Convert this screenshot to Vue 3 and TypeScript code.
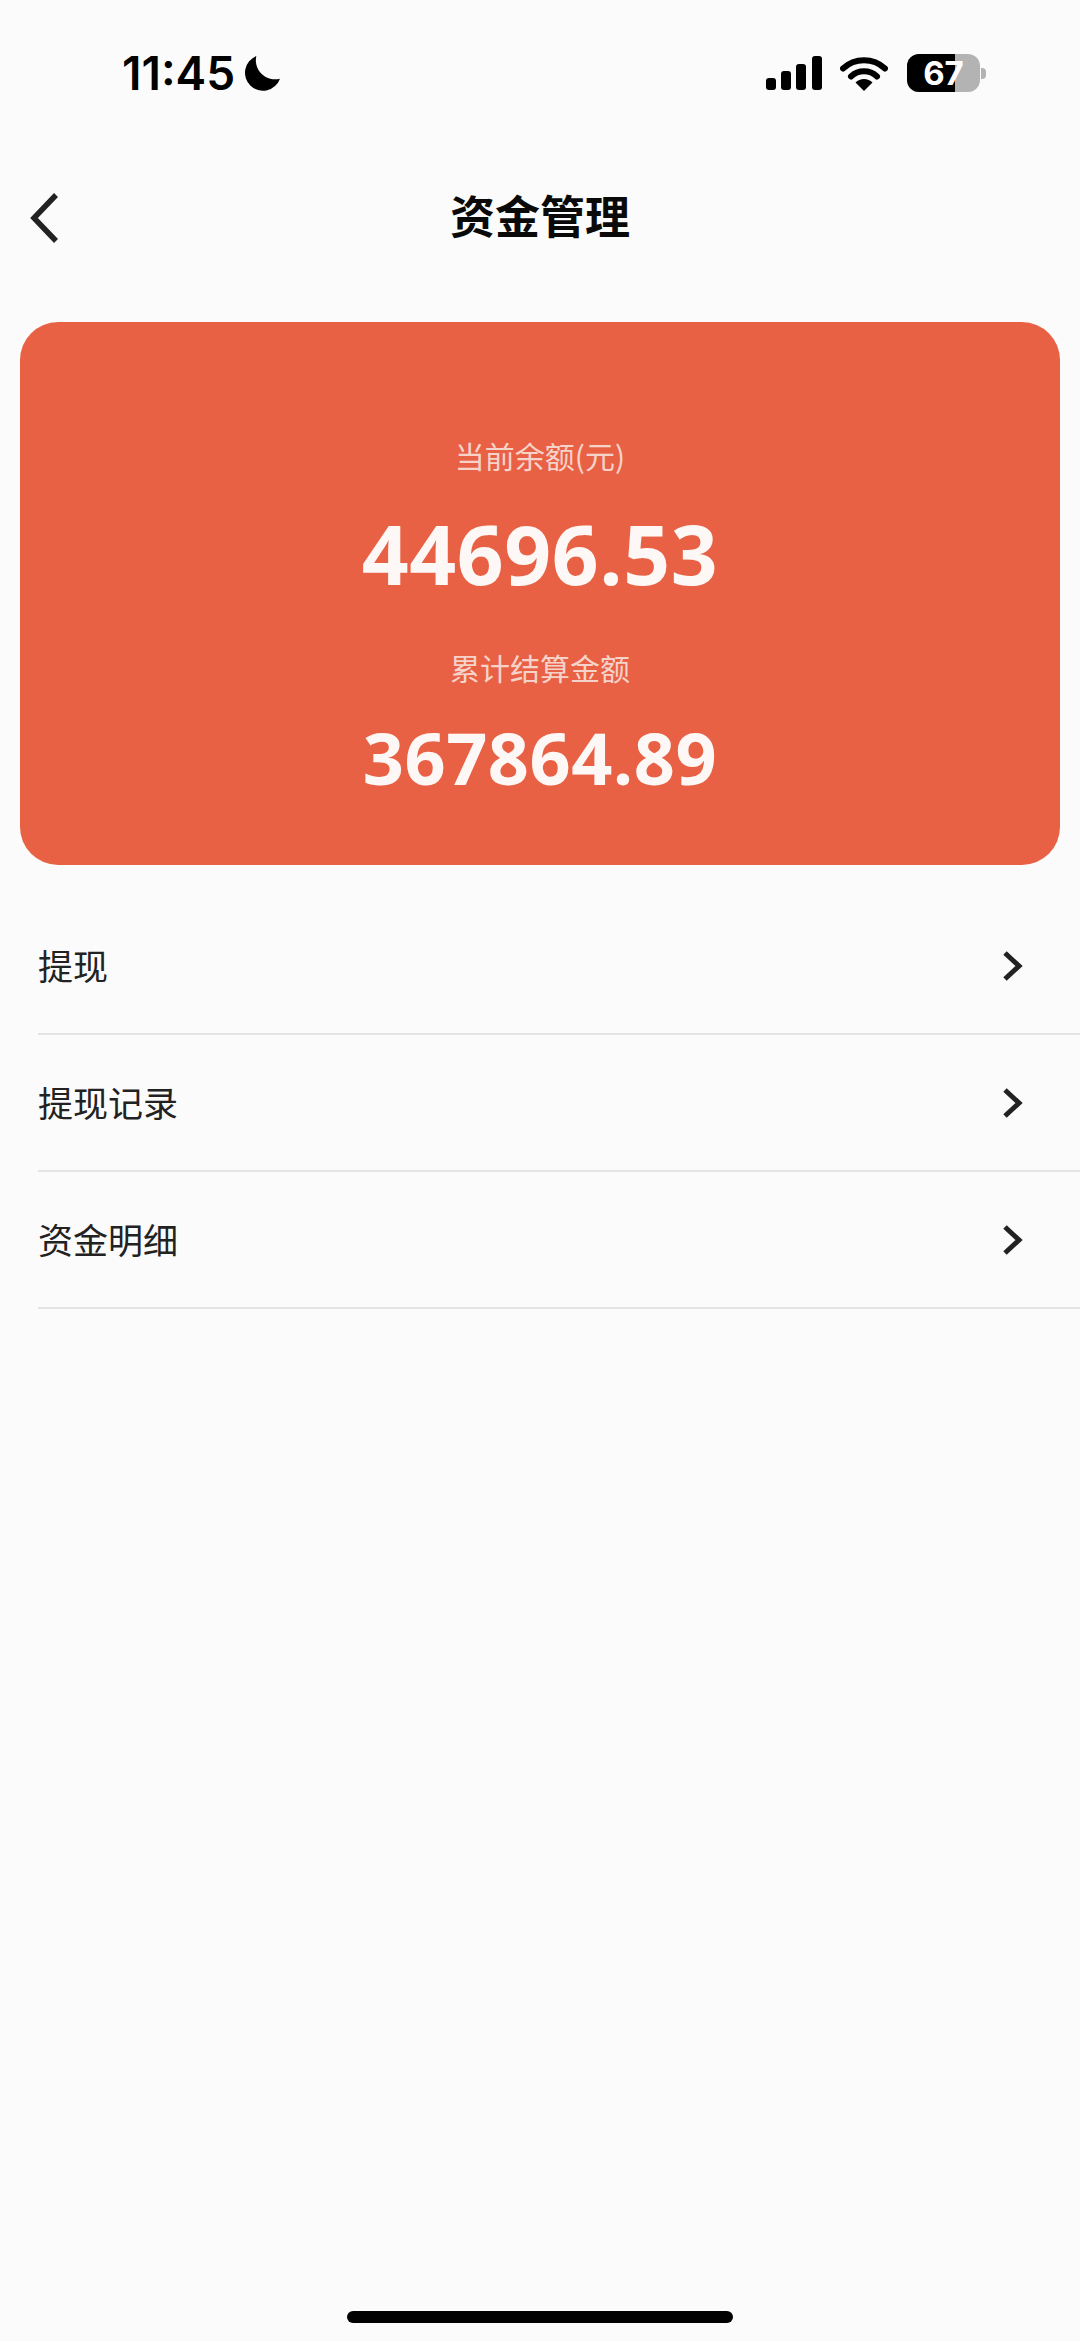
<script setup lang="ts">
const rows: string[] = ['提现', '提现记录', '资金明细']
const bars = [
  { x: 0, y: 22, h: 12 },
  { x: 15, y: 15, h: 19 },
  { x: 30, y: 8, h: 26 },
  { x: 46, y: 0, h: 34 },
]
</script>

<template>
  <div class="page">
    <header class="status">
      <div class="status-left">
        <span class="time">11:45</span>
        <svg class="moon" width="37" height="37" viewBox="0 0 36 36">
          <path d="M12 1A17.5 17.5 0 1 0 35 23A18.5 18.5 0 0 1 12 1Z" fill="#000" />
        </svg>
      </div>
      <div class="status-right">
        <svg width="56" height="34" viewBox="0 0 56 34">
          <rect v-for="b in bars" :key="b.x" :x="b.x" :y="b.y" width="10" :height="b.h" rx="3" fill="#000" />
        </svg>
        <svg class="wifi" width="48" height="35" viewBox="0 0 48 35">
          <path d="M3 12.500A31 31 0 0 1 45 12.500" fill="none" stroke="#000" stroke-width="6" stroke-linecap="round" />
          <path d="M11 20.500A19 19 0 0 1 37 20.500" fill="none" stroke="#000" stroke-width="6" stroke-linecap="round" />
          <path d="M15.500 26.500A12 12 0 0 1 32.500 26.500L24 35Z" fill="#000" />
        </svg>
        <div class="battery">
          <div class="battery-body">
            <div class="battery-fill"></div>
            <span class="battery-text">67</span>
          </div>
          <div class="battery-nub"></div>
        </div>
      </div>
    </header>

    <nav class="nav">
      <svg class="back" width="36" height="52" viewBox="0 0 36 52">
        <path d="M29 3L7 26L29 49" fill="none" stroke="#222" stroke-width="5.500" />
      </svg>
      <h1 class="title">资金管理</h1>
      <span></span>
    </nav>

    <section class="card">
      <div class="label">当前余额(元)</div>
      <div class="amount">44696.53</div>
      <div class="label second">累计结算金额</div>
      <div class="amount small">367864.89</div>
    </section>

    <ul class="list">
      <li v-for="r in rows" :key="r" class="row">
        <span class="row-text">{{ r }}</span>
        <svg width="22" height="32" viewBox="0 0 22 32">
          <path d="M3 3L17 16L3 29" fill="none" stroke="#222" stroke-width="5" />
        </svg>
      </li>
    </ul>

    <div class="home"></div>
  </div>
</template>

<style>
html, body { margin: 0; background: #fbfbfb; }
</style>

<style scoped>
.page {
  width: 1080px;
  height: 2341px;
  display: flex;
  flex-direction: column;
  background: #fbfbfb;
  font-family: "Noto Sans", "Noto Sans CJK SC", sans-serif;
  overflow: hidden;
}
.status {
  height: 146px;
  flex: none;
  display: flex;
  align-items: center;
  justify-content: space-between;
  padding: 0 94px 0 122px;
  box-sizing: border-box;
}
.status-left, .status-right { display: flex; align-items: center; }
.time {
  font-family: Inter, sans-serif;
  font-weight: 600;
  font-size: 46px;
  line-height: 50px;
  color: #000;
}
.moon { margin-left: 9px; }
.wifi { margin-left: 18px; }
.battery { display: flex; align-items: center; margin-left: 19px; }
.battery-body {
  position: relative;
  width: 73px;
  height: 38px;
  border-radius: 12px;
  background: #b3b3b3;
  display: flex;
  align-items: center;
  justify-content: center;
}
.battery-fill {
  position: absolute;
  left: 0;
  top: 0;
  bottom: 0;
  width: 48px;
  border-radius: 12px 0 0 12px;
  background: #000;
}
.battery-text {
  position: relative;
  color: #fff;
  font-family: Inter, sans-serif;
  font-weight: 700;
  font-size: 33px;
  line-height: 38px;
}
.battery-nub {
  width: 5px;
  height: 11px;
  margin-left: 1px;
  border-radius: 0 4px 4px 0;
  background: #b3b3b3;
}
.nav {
  height: 144px;
  flex: none;
  display: grid;
  grid-template-columns: 1fr auto 1fr;
  align-items: center;
  padding: 0 27px;
}
.back { display: block; }
.title {
  margin: 0 0 6px;
  font-family: "Noto Sans CJK SC", sans-serif;
  font-size: 45px;
  line-height: 60px;
  font-weight: 700;
  color: #0a0a0a;
}
.card {
  flex: none;
  margin: 32px 20px 0;
  height: 543px;
  box-sizing: border-box;
  padding-top: 113px;
  border-radius: 38px;
  background: #e96144;
  display: flex;
  flex-direction: column;
  align-items: center;
}
.label {
  font-family: "Noto Sans CJK SC", sans-serif;
  font-size: 30px;
  line-height: 40px;
  color: #f6d3ca;
}
.label.second { margin-top: 44px; }
.amount {
  margin-top: 28px;
  font-family: "Open Sans", sans-serif;
  font-weight: 700;
  font-size: 82px;
  letter-spacing: 0.6px;
  line-height: 100px;
  color: #fdf8f6;
}
.amount.small {
  margin-top: 25px;
  font-size: 72px;
  letter-spacing: 0.5px;
  line-height: 90px;
}
.list {
  flex: 1;
  list-style: none;
  margin: 33px 0 0 38px;
  padding: 0;
}
.row {
  height: 137px;
  box-sizing: border-box;
  display: flex;
  align-items: center;
  justify-content: space-between;
  padding: 0 56px 0 0;
  border-bottom: 2px solid #e4e4e4;
  font-family: "Noto Sans CJK SC", sans-serif;
  font-size: 35px;
  color: #222;
}
.row-text { margin-bottom: 3px; }
.home {
  flex: none;
  width: 386px;
  height: 12px;
  margin: 0 auto 18px;
  border-radius: 6px;
  background: #000;
}
</style>
